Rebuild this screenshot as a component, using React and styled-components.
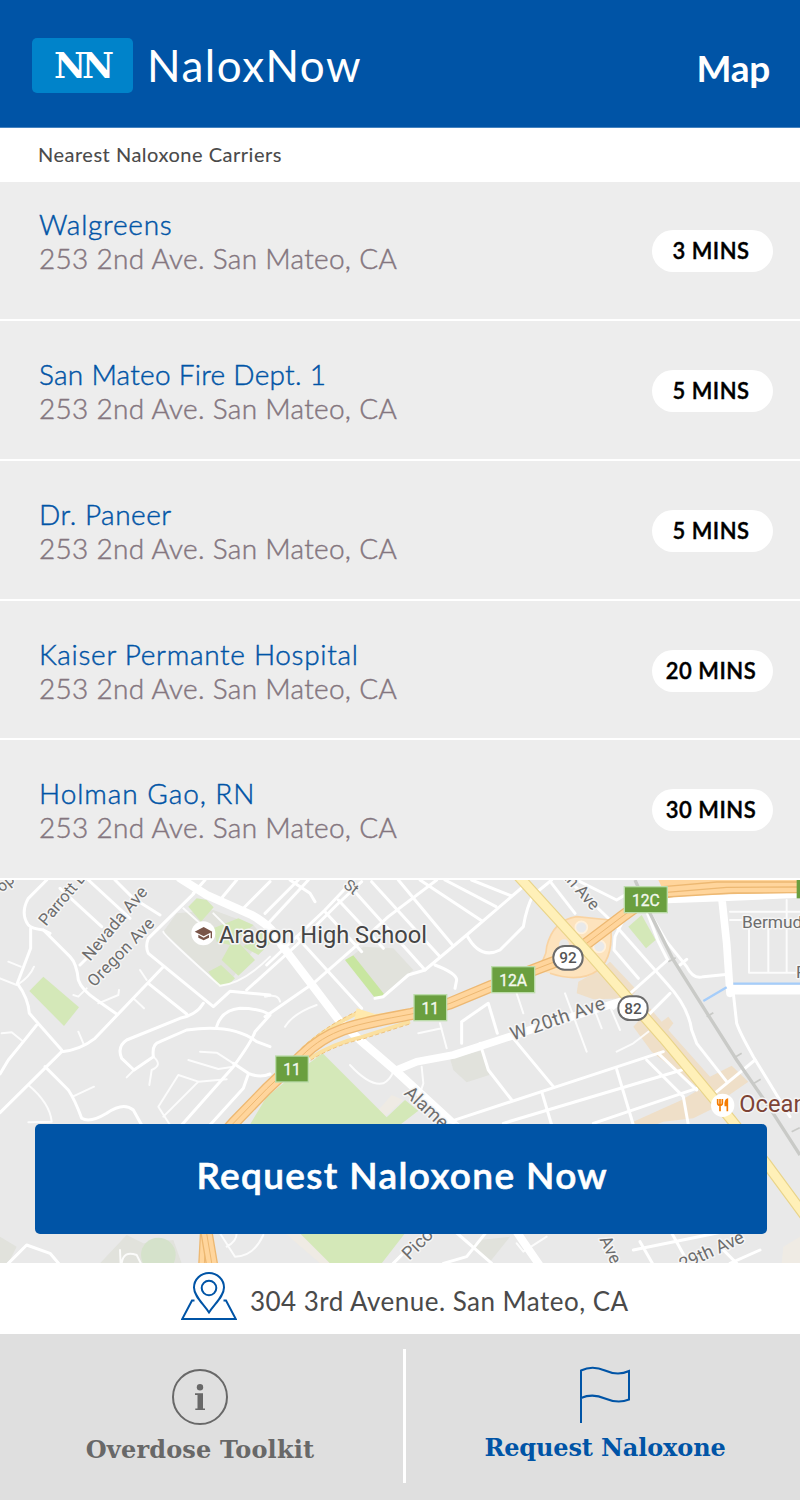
import React from "react";
import styled, { createGlobalStyle } from "styled-components";

const BLUE = "#0054a6";
const SANS = 'Lato, "Open Sans", sans-serif';
const SLAB = '"DejaVu Serif", "Liberation Serif", serif';

const GlobalStyle = createGlobalStyle`
  *, *::before, *::after { box-sizing: border-box; }
  body { margin: 0; background: #fff; font-family: ${SANS}; }
`;

const Screen = styled.main`
  display: flex;
  flex-direction: column;
  width: 800px;
  height: 1500px;
  overflow: hidden;
  background: #fff;
`;

const Header = styled.header`
  display: flex;
  align-items: flex-start;
  height: 128px;
  padding: 38px 30px 0 32px;
  background: ${BLUE};
  border-bottom: 1px solid #4583c0;
  color: #fff;
`;

const Logo = styled.div`
  display: flex;
  justify-content: center;
  width: 101px;
  height: 55px;
  padding-right: 1px;
  border-radius: 5px;
  background: #0083ca;
  font: 700 35px/56px "DejaVu Serif", serif;
  letter-spacing: -4px;
`;

const Brand = styled.h1`
  flex: 1;
  margin: 0 0 0 14px;
  font-size: 44px;
  font-weight: 400;
  line-height: 55px;
  letter-spacing: 1.5px;
`;

const MapLink = styled.a`
  font-size: 37px;
  font-weight: 700;
  line-height: 60px;
  letter-spacing: -0.3px;
`;

const SectionTitle = styled.h2`
  height: 54px;
  margin: 0;
  padding-left: 38px;
  color: #4a4a4a;
  font-size: 20px;
  font-weight: 400;
  line-height: 53px;
  letter-spacing: 0.51px;
  -webkit-text-stroke: 0.1px currentColor;
`;

const CarrierList = styled.ul`
  display: grid;
  grid-template-rows: 139px repeat(4, 1fr);
  height: 698px;
  margin: 0;
  padding: 0;
  list-style: none;
`;

const Carrier = styled.li`
  display: flex;
  justify-content: space-between;
  padding: 36px 27px 0 39px;
  background: #ededed;
  border-bottom: 2px solid #fff;
  &:first-child { padding-top: 25px; }
`;

const Name = styled.div`
  color: ${BLUE};
  font-size: 28px;
  font-weight: 300;
  line-height: 34px;
  letter-spacing: ${(p) => p.$spacing}px;
  -webkit-text-stroke: 0.45px currentColor;
`;

const Street = styled(Name)`
  color: #84767f;
`;

const Minutes = styled.span`
  width: 121px;
  height: 42px;
  margin-top: ${(p) => (p.$first ? 23 : 13)}px;
  padding-right: 3px;
  border-radius: 21px;
  background: #fff;
  color: #000;
  font-size: 22px;
  font-weight: 600;
  line-height: 41px;
  text-align: center;
  letter-spacing: 0.5px;
  -webkit-text-stroke: 0.4px currentColor;
`;

const MapPanel = styled.section`
  position: relative;
  height: 383px;
`;

const MapSvg = styled.svg`
  display: block;
  width: 800px;
  height: 383px;
  font-family: Roboto, sans-serif;
`;

const RequestButton = styled.button`
  position: absolute;
  left: 34.5px;
  top: 244px;
  width: 732.5px;
  height: 109.5px;
  padding: 0 0 7px 3px;
  border: 0;
  border-radius: 5px;
  background: ${BLUE};
  color: #fff;
  font: 600 37px/1.2 ${SANS};
  letter-spacing: 1.35px;
  -webkit-text-stroke: 0.6px currentColor;
`;

const AddressBar = styled.div`
  display: flex;
  height: 71px;
  padding: 9px 0 0 181px;
  gap: 13px;
  color: #4a4a4a;
  font-size: 26px;
  line-height: 59px;
  letter-spacing: 0.47px;
`;

const Footer = styled.footer`
  display: flex;
  height: 166px;
  padding: 15px 0 17px;
  background: #dfdfdf;
`;

const Tab = styled.div`
  display: flex;
  flex-direction: column;
  align-items: center;
  width: ${(p) => p.$width}px;
  padding-top: ${(p) => p.$top}px;
  padding-left: ${(p) => p.$left || 0}px;
  padding-right: ${(p) => p.$right || 0}px;
  color: ${(p) => p.$color};
  font: 700 24px/30px ${SLAB};
  svg { display: block; margin-bottom: ${(p) => p.$gap}px; }
`;

const TabLabel = styled.span`
  white-space: nowrap;
  letter-spacing: ${(p) => p.$spacing};
`;

const Divider = styled.div`
  width: 3px;
  height: 134px;
  background: #fff;
`;

const carriers = [
  { name: "Walgreens", time: "3 MINS", spacing: 0.75 },
  { name: "San Mateo Fire Dept. 1", time: "5 MINS", spacing: 0.27 },
  { name: "Dr. Paneer", time: "5 MINS", spacing: 0.5 },
  { name: "Kaiser Permante Hospital", time: "20 MINS", spacing: 0.7 },
  { name: "Holman Gao, RN", time: "30 MINS", spacing: 0.95 },
];

const parks = [
  "M130 320L237 412 192 468 88 363Z",
  "M565 110L590 85 620 90 641 112 603 155Z",
  "M640 175L715 145 760 165 725 195 690 225 650 215Z",
  "M730 230L790 180 815 215 775 255Z",
  "M665 270L690 225 720 222 765 270 715 317Z",
  "M625 305L663 285 705 325 690 340 655 347Z",
  "M968 550L1160 742 1215 690 1255 722 1180 780 740 780 800 680 900 600Z",
  "M890 1080L1300 1060 1215 1090 1145 1180 990 1180Z",
  "M1885 170L1925 135 1967 210 1938 235Z",
];

const sand = [
  "M1735 335L1800 300 1830 275 1910 360 1890 385 1780 388 1730 370Z",
  "M1900 470L1950 415 1985 455 2005 440 2020 460 2005 480 2130 620 2195 587 2245 635 2180 680 2090 650 1955 545Z",
  "M2045 690L2095 660 2150 710 2080 745 1990 755 1900 790 1900 755Z",
];

const paleSand = [
  "M1155 740L1135 720 1175 675 1210 690Z",
  "M850 1085L900 1085 1000 1180 960 1180Z",
  "M2400 1100L2350 1130 2345 1180 2400 1180Z",
];

const campus = [
  "M530 130L640 120 760 165 790 200 700 320 660 345 490 185Z",
  "M1060 255L1090 230 1180 235 1240 300 1150 375Z",
  "M1350 565L1450 540 1468 615 1400 637 1360 600Z",
  "M0 1100L50 1130 25 1180 0 1180Z",
  "M300 1180L380 1095 430 1120 520 1110 545 1180Z",
  "M1410 1130L1440 1110 1530 1100 1470 1175Z",
];

const streets = [
  "M140 30L85 85Q60 130 85 165 95 176 130 180L210 260Q230 280 235 330 245 360 290 390L350 432",
  "M92 175V235L52 340Q85 385 88 430L185 540",
  "M0 728L185 545Q240 540 285 505L490 290",
  "M0 612L25 570 70 515 110 465",
  "M180 55L305 170M130 180L150 190M240 285L290 235M265 30L390 145M345 30L400 85 480 135",
  "M135 590L205 660Q225 690 245 745 270 760 320 730 370 695 400 720L425 765",
  "M582 70L445 205Q435 230 445 250L640 410 690 364 810 375",
  "M445 340L560 432M610 400Q590 435 540 445L380 510Q350 530 365 565L402 600 460 560Q455 520 480 515L560 480Q700 460 770 515L810 530",
  "M650 470Q665 420 720 415 780 415 810 435L765 485Q755 515 700 590L545 765",
  "M700 580L745 610Q780 625 810 612M745 612L730 655 630 765",
  "M580 70L615 30M660 90L710 30M725 120L810 35M740 360L890 225 1010 105 1085 35M800 285L975 120 1060 30",
  "M795 440L940 340 1060 235 1165 140 1310 30M795 130L895 30M800 165L925 30",
  "M870 30L930 70 945 95M890 200L1085 415M975 125L1085 245M1015 90L1150 235M1060 60L1275 300M1115 35L1320 260M1195 30L1360 228M1260 30L1445 152M1335 30L1488 110M1415 30L1535 78",
  "M1125 385L1150 380 1225 315 1275 300 1400 195 1575 45M1400 195Q1440 270 1500 240L1570 170Q1580 110 1600 75L1655 30",
  "M1305 285Q1370 310 1370 330L1365 355M1385 455L1465 400 1492 490M1385 455V520",
  "M1440 520L1465 600 1535 690M1540 505L1660 650M1350 755L1700 640 1990 545M1510 760L2045 600M1780 760L2090 655",
  "M1850 598L1900 765M1625 665L1655 765M1940 570L2050 680 2065 765M1975 550L2090 660",
  "M1655 40L1725 130M1705 30L1815 135 1850 170 2000 340Q2065 410 2075 480L2090 520 2180 635",
  "M1870 150L1845 200 1842 240 1915 325M1870 150L1935 110 1975 215 2003 270 1840 415M1730 30L1850 90 1900 60",
  "M1950 130L2000 215 2060 290Q2080 330 2110 320L2185 313M2040 285L2060 268M1950 430L2010 370M2150 665L2265 570",
  "M2200 370L2210 460Q2220 490 2260 560L2370 740",
  "M20 1185L80 1125 150 1150 180 1185M1180 1180L1230 1130 1300 1080M1330 1180L1400 1160 1480 1060M1360 1080L1475 1180",
  "M1900 1140L2170 1085 2180 1060M1920 1115L1960 1185M2010 1080L2060 1170M2160 1130L2210 1180M2190 1180L2280 1140",
];

const lanes = [
  "M0 325L50 345M25 275L62 290M52 345Q90 320 102 290M5 490L35 487 70 515M235 485L250 520",
  "M85 645Q150 700 155 755L85 757M218 680L282 650M220 375L235 380 260 355M295 400L355 375 357 360M420 300L440 330M400 385L432 415",
  "M490 185Q490 195 660 347 730 340 810 260M550 115L600 160M640 130L680 170",
  "M460 560Q490 585 455 600L448 645M535 615L475 710 510 765M535 615L595 635 680 628M595 635L490 740M600 545L650 548 700 580M565 570L655 597 700 590M380 622L402 600",
  "M855 470Q880 430 950 405M795 380Q835 370 840 395M1050 585Q1110 650 1150 640 1170 630 1180 605M1265 590L1270 640 1260 670M1255 490L1325 475M1320 460L1340 535M1550 370L1570 430",
  "M1695 370L1760 545M1780 410L1805 475M1830 410L1860 480M1850 545L1900 520 1945 485",
  "M2190 150H2400M2190 125H2400M2247 170V308H2400M2305 170V308M2360 90V308",
  "M660 1090L705 1160Q760 1160 790 1095M680 1130Q710 1115 710 1090M360 1140L362 1185M365 1180Q370 1140 410 1155L425 1185M1550 1120L1570 1145 1640 1100",
];

const highway =
  "M610 1240L620 1050 560 920 700 760 800 657 905 558C990 475 1060 465 1235 432L1350 400 1475 348 1600 300 1665 275 1740 235 1870 137 1910 108C1960 70 2000 60 2100 56L2400 50";
const lowerHighway = "M608 1050L620 1090 637 1190";
const elCamino = "M1552 15L1775 260 1990 505 2190 745 2300 882 2420 1045";

const labels = [
  { x: 138, y: 170, r: -50, s: 49, t: "Parrott Dr" },
  { x: 270, y: 275, r: -50, s: 51, t: "Nevada Ave", w: 272 },
  { x: 283, y: 353, r: -46, s: 50, t: "Oregon Ave", w: 264 },
  { x: 5, y: 68, r: -40, s: 48, t: "op" },
  { x: 1028, y: 50, r: 38, s: 46, t: "St" },
  { x: 1688, y: 22, r: 49, s: 50, t: "th Ave", w: 135 },
  { x: 1210, y: 672, r: 43, s: 55, t: "Alameda" },
  { x: 1538, y: 512, r: -19, s: 57, t: "W 20th Ave", w: 297 },
  { x: 2226, y: 174, r: 0, s: 52, t: "Bermuda" },
  { x: 2388, y: 325, r: 0, s: 52, t: "F" },
  { x: 1228, y: 1172, r: -45, s: 54, t: "Pico" },
  { x: 1798, y: 1108, r: 65, s: 52, t: "Ave" },
  { x: 2048, y: 1202, r: -25, s: 54, t: "29th Ave", w: 208 },
];

const exits = [
  { x: 829, y: 560, w: 94, t: "11" },
  { x: 1244, y: 376, w: 94, t: "11" },
  { x: 1477, y: 292, w: 125, t: "12A" },
  { x: 1875, y: 52, w: 125, t: "12C" },
];

const shields = [
  { x: 1704, y: 264, t: "92" },
  { x: 1899, y: 415, t: "82" },
];

function ExitSign({ x, y, w, t }) {
  return (
    <g>
      <rect x={x - 4} y={y - 4} width={w + 8} height="82" fill="#bcdcab" />
      <rect x={x} y={y} width={w} height="74" fill="#6a9f3f" />
      <text x={x + w / 2} y={y + 55} fontSize="47" fill="#f4f9ef" stroke="#f4f9ef" strokeWidth="1" textAnchor="middle">{t}</text>
    </g>
  );
}

function Shield({ x, y, t }) {
  return (
    <g>
      <rect x={x - 44} y={y - 36} width="88" height="71" rx="34" fill="#fff" stroke="#6c6c6c" strokeWidth="6" />
      <text x={x} y={y + 16} fontSize="46" fontWeight="500" fill="#555" textAnchor="middle">{t}</text>
    </g>
  );
}

function StreetMap() {
  return (
    <MapSvg viewBox="0 30 2400 1149" preserveAspectRatio="none" aria-label="Map of San Mateo">
      <rect y="30" width="2400" height="1150" fill="#e9e9e9" />
      {campus.map((d) => <path key={d} d={d} fill="#e1e2dc" />)}
      {sand.map((d) => <path key={d} d={d} fill="#efdfc8" />)}
      {paleSand.map((d) => <path key={d} d={d} fill="#efebe4" />)}
      {parks.map((d) => <path key={d} d={d} fill="#d4e8b8" />)}
      <path d="M1035 270L1060 256 1152 372 1142 382 1122 380Z" fill="#c8e6a0" />
      <circle cx="475" cy="1155" r="52" fill="#d5e2cb" />
      <g fill="none" stroke="#fff" strokeLinejoin="round" strokeLinecap="round">
        {lanes.map((d) => <path key={d} d={d} strokeWidth="6" opacity=".85" />)}
        {streets.map((d) => <path key={d} d={d} strokeWidth="9" />)}
        <path d="M540 25L620 75 755 135Q820 170 845 225L1020 455 1080 510 1190 605 1375 775" strokeWidth="25" />
        <path d="M1330 1060L1420 1080M1540 1070L1570 1115 1625 1195" strokeWidth="24" />
        <path d="M1190 600L1250 575 1360 555 1590 480 1860 395" strokeWidth="23" />
        <path d="M1880 120L1960 90 2130 84 2400 72M2165 80L2180 220 2190 370" strokeWidth="23" />
        <path d="M2195 359H2400" strokeWidth="29" />
      </g>
      <path d="M2110 393L2180 352M2200 341H2400" fill="none" stroke="#a5cdfa" strokeWidth="7" />
      <path d="M1905 30L1950 130 2020 270 2210 570 2310 715 2400 855" fill="none" stroke="#c9cac7" strokeWidth="10" />
      <path d="M2005 275l22 -12M2120 440l20 -12M2205 562l20 -12M2262 640l20 -12M2375 785l24 -12" stroke="#c9cac7" strokeWidth="5" />
      <g fill="none" strokeLinejoin="round">
        <path d="M1600 300Q1640 270 1640 230 1660 150 1730 140L1830 150Q1845 260 1795 300 1740 340 1650 310" fill="#fde3bd" stroke="#f9d3a2" strokeWidth="5" />
        <circle cx="1744" cy="172" r="18" fill="#e9e9e9" stroke="#fff1dc" strokeWidth="5" />
        <circle cx="1798" cy="229" r="18" fill="#e9e9e9" stroke="#fff1dc" strokeWidth="5" />
        <circle cx="1692" cy="223" r="15" fill="#e9e9e9" />
        <path d="M905 540C970 480 1030 450 1080 425M930 565Q1000 520 1090 500L1230 455" stroke="#fbe0a0" strokeWidth="12" />
        <path d="M905 534C970 474 1030 444 1080 419M932 571Q1002 526 1092 506L1232 461" stroke="#efc27c" strokeWidth="3" strokeDasharray="12 7" />
        <path d="M1070 415L1125 432 1250 418 1240 440 1060 465Z" fill="#ffe9ad" />
        {[highway, lowerHighway].map((d) => (
          <g key={d}>
            <path d={d} stroke="#edb872" strokeWidth="37" />
            <path d={d} stroke="#ffd59c" strokeWidth="29" />
            <path d={d} stroke="#edb872" strokeWidth="3" />
          </g>
        ))}
        <path d="M1975 30H2400V68L2200 70 2000 82Z" fill="#ffd59c" />
        <path d="M1990 50L2150 36H2400M1990 68L2180 52 2400 51M2000 81L2200 69 2400 68" stroke="#edb872" strokeWidth="4" />
        <path d={elCamino} stroke="#e9d48a" strokeWidth="33" />
        <path d={elCamino} stroke="#fff0b8" strokeWidth="26" />
      </g>
      {exits.map((e) => <ExitSign key={e.x} {...e} />)}
      <rect x="2390" y="30" width="10" height="55" fill="#6a9f3f" />
      {shields.map((s) => <Shield key={s.t} {...s} />)}
      <g fill="#6d6d6d" stroke="#f5f5f5" strokeWidth="9" strokeLinejoin="round" paintOrder="stroke">
        {labels.map((l) => (
          <text key={l.t + l.x} transform={`translate(${l.x} ${l.y}) rotate(${l.r})`} fontSize={l.s} textLength={l.w}>{l.t}</text>
        ))}
        <text x="657" y="218" fontSize="71" textLength="624" fill="#454545">Aragon High School</text>
        <text x="2218" y="726" fontSize="71" fill="#7d4336">Ocean</text>
      </g>
      <circle cx="610" cy="190" r="36" fill="#fff" />
      <path d="M584 185L611 171 637 185 611 199Z" fill="#795548" />
      <path d="M595 194V203L611 211 627 203V194L611 203Z" fill="#795548" />
      <path d="M634 186V205" stroke="#795548" strokeWidth="4" />
      <circle cx="2168" cy="706" r="35" fill="#fff" />
      <g fill="none" stroke="#f57c00" strokeWidth="5">
        <path d="M2153 687V699Q2153 706 2160 706 2167 706 2167 699V687M2160 687V724" />
        <path d="M2182 724V688Q2175 690 2176 706H2182Z" fill="#f57c00" />
      </g>
    </MapSvg>
  );
}

function PinIcon() {
  return (
    <svg width="56" height="49" viewBox="0 0 56 49" fill="none" stroke={BLUE} strokeWidth="2">
      <path d="M28 40.5C22 31.500 13 24 13 15.500A15 14.500 0 0 1 43 15.500C43 24 34 31.500 28 40.500Z" />
      <circle cx="28" cy="16" r="7.300" />
      <path d="M13.500 28.500H11L1.200 47H54.800L45 28.500H42.500" />
    </svg>
  );
}

function InfoIcon() {
  return (
    <svg width="56" height="56" viewBox="0 0 56 56">
      <circle cx="28" cy="28" r="27" fill="none" stroke="currentColor" strokeWidth="2" />
      <circle cx="28" cy="18.200" r="3.200" fill="currentColor" />
      <path d="M23 24.300H31V39.500H33V41H23.300V39.500H25.500V26H23Z" fill="currentColor" />
    </svg>
  );
}

function FlagIcon() {
  return (
    <svg width="52" height="57" viewBox="0 0 52 57" fill="none" stroke="currentColor" strokeWidth="2">
      <path d="M2 57V4.500C9 1 17 .5 26 4.500 35 8.500 43 8.300 50 5V33.500C43 36.500 35 36.300 26 32.500 17 28.500 9 29 2 32" />
    </svg>
  );
}

export default function App() {
  return (
    <Screen>
      <GlobalStyle />
      <Header>
        <Logo>NN</Logo>
        <Brand>NaloxNow</Brand>
        <MapLink>Map</MapLink>
      </Header>
      <SectionTitle>Nearest Naloxone Carriers</SectionTitle>
      <CarrierList>
        {carriers.map(({ name, time, spacing }, i) => (
          <Carrier key={name}>
            <div>
              <Name $spacing={spacing}>{name}</Name>
              <Street $spacing={0.3}>253 2nd Ave. San Mateo, CA</Street>
            </div>
            <Minutes $first={i === 0}>{time}</Minutes>
          </Carrier>
        ))}
      </CarrierList>
      <MapPanel>
        <StreetMap />
        <RequestButton>Request Naloxone Now</RequestButton>
      </MapPanel>
      <AddressBar>
        <PinIcon />
        <span>304 3rd Avenue. San Mateo, CA</span>
      </AddressBar>
      <Footer>
        <Tab $width={403} $right={3} $top={20} $gap={10} $color="#686868">
          <InfoIcon />
          <TabLabel $spacing="0.17px">Overdose Toolkit</TabLabel>
        </Tab>
        <Divider />
        <Tab $width={394} $left={5} $right={1} $top={17} $gap={10} $color={BLUE}>
          <FlagIcon />
          <TabLabel $spacing="-0.13px">Request Naloxone</TabLabel>
        </Tab>
      </Footer>
    </Screen>
  );
}
